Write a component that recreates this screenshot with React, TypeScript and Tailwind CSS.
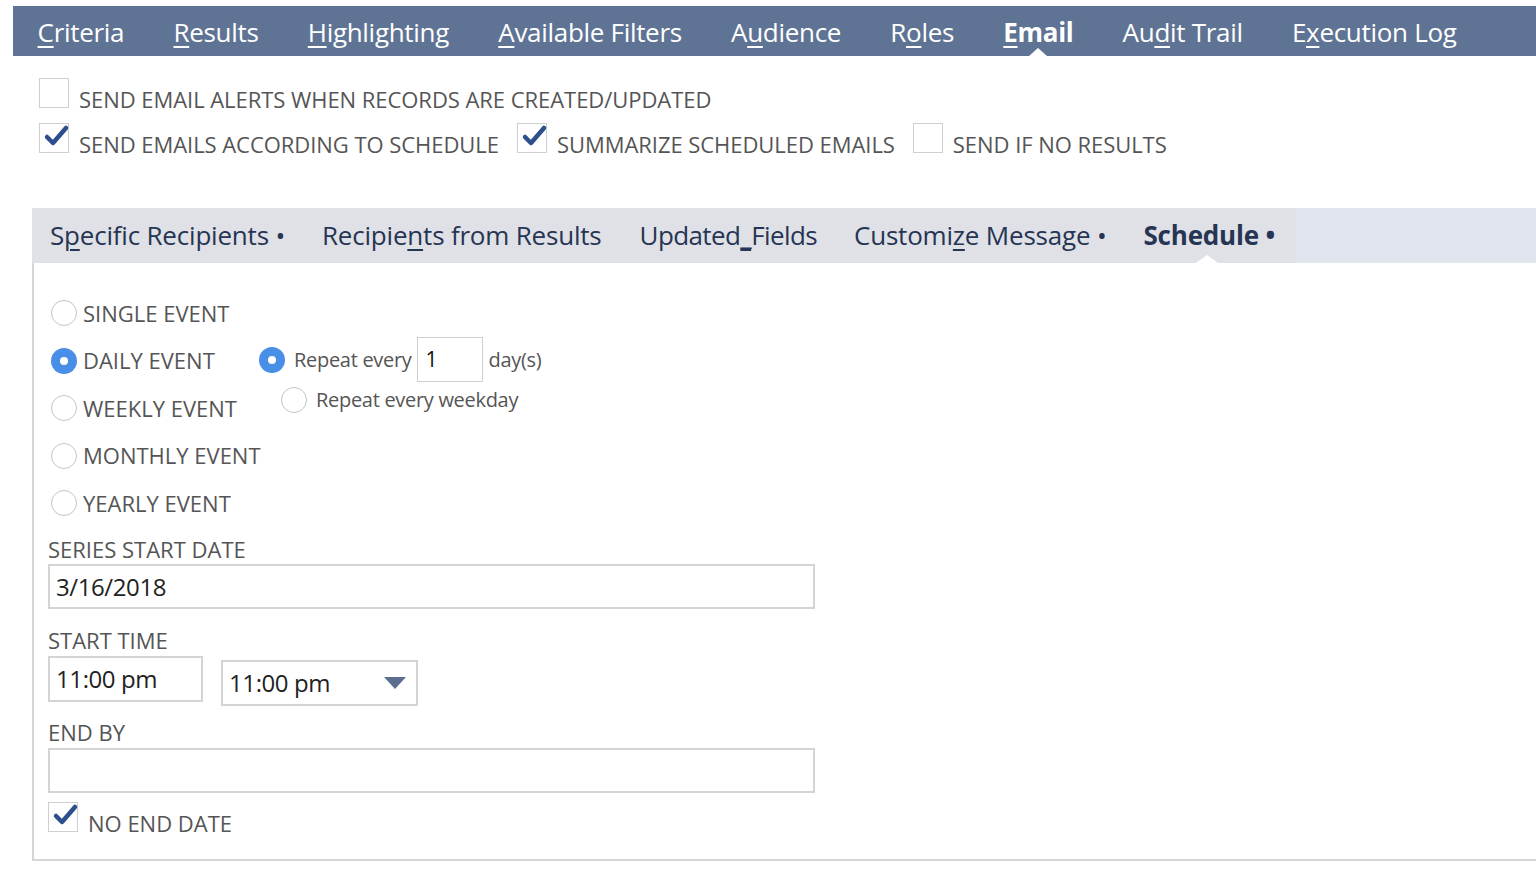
import React from "react";

const navItems = [
  { pre: "", u: "C", post: "riteria" },
  { pre: "", u: "R", post: "esults" },
  { pre: "", u: "H", post: "ighlighting" },
  { pre: "", u: "A", post: "vailable Filters" },
  { pre: "A", u: "u", post: "dience" },
  { pre: "R", u: "o", post: "les" },
  { pre: "", u: "E", post: "mail", active: true },
  { pre: "Au", u: "d", post: "it Trail" },
  { pre: "E", u: "x", post: "ecution Log" },
];

function Checkbox({ checked }: { checked?: boolean }) {
  return (
    <span className="relative inline-block h-[30px] w-[30px] shrink-0 border border-[#cfcfcf] bg-white">
      {checked ? (
        <svg viewBox="0 0 30 30" className="absolute -top-[4px] left-[2px] h-[30px] w-[30px]">
          <path d="M5 17 L11 23 L24 8" fill="none" stroke="#2f4f8c" strokeWidth="4.5" strokeLinecap="round" strokeLinejoin="round" />
        </svg>
      ) : null}
    </span>
  );
}

function Radio({ checked }: { checked?: boolean }) {
  return checked ? (
    <span className="flex h-[26px] w-[26px] shrink-0 items-center justify-center rounded-full bg-[#4a8fe7]">
      <span className="h-[8px] w-[8px] rounded-full bg-white" />
    </span>
  ) : (
    <span className="h-[26px] w-[26px] shrink-0 rounded-full border border-[#c4c4c4] bg-white" />
  );
}

function CheckLabel({ checked, label }: { checked?: boolean; label: string }) {
  return (
    <label className="flex items-end gap-[10px]">
      <Checkbox checked={checked} />
      <span className="whitespace-nowrap text-[22px] leading-[18px] tracking-[-0.05px] text-[#555]">{label}</span>
    </label>
  );
}

const fieldLabel = "text-[22px] leading-[28px] text-[#555]";
const fieldBox = "flex items-center border-2 border-[#d4d4d4] pl-[6px] text-[24px] tracking-[-0.4px] text-[#222]";

export default function App() {
  return (
    <div className="min-h-[870px] bg-white pt-[6px] text-[#555]" style={{ fontFamily: '"Open Sans", "Liberation Sans", sans-serif' }}>
      <nav className="ml-[13px] flex h-[50px] items-center bg-[#5f7494]">
        {navItems.map((n) => (
          <div
            key={n.pre + n.u + n.post}
            className={`relative flex h-full items-center px-[24.6px] pt-[2px] text-[26px] tracking-[-0.3px] text-white ${n.active ? "font-bold" : ""}`}
          >
            <span>
              {n.pre}
              <span className="underline decoration-[1.5px] underline-offset-[4px]">{n.u}</span>
              {n.post}
            </span>
            {n.active ? (
              <span className="absolute bottom-0 left-1/2 h-0 w-0 -translate-x-1/2 border-x-[9px] border-b-[8px] border-x-transparent border-b-white" />
            ) : null}
          </div>
        ))}
      </nav>

      <div className="ml-[39px] mt-[22px] flex flex-col gap-[15px]">
        <CheckLabel label="SEND EMAIL ALERTS WHEN RECORDS ARE CREATED/UPDATED" />
        <div className="flex items-end gap-[18px]">
          <CheckLabel checked label="SEND EMAILS ACCORDING TO SCHEDULE" />
          <CheckLabel checked label="SUMMARIZE SCHEDULED EMAILS" />
          <CheckLabel label="SEND IF NO RESULTS" />
        </div>
      </div>

      <div className="ml-[32px] mt-[55px]">
        <div className="flex h-[55px] bg-[#e1e6ee]">
          <div className="flex h-full items-center bg-[#e0e1e6] pl-[18px] pr-[21px] text-[26px] tracking-[-0.2px] text-[#263553]">
            <span className="mr-[37px]">
              S<span className="underline decoration-[1.5px] underline-offset-[4px]">p</span>ecific Recipients •
            </span>
            <span className="mr-[38px]">
              Recipie<span className="underline decoration-[1.5px] underline-offset-[4px]">n</span>ts from Results
            </span>
            <span className="mr-[37px] tracking-[-0.6px]">
              Updated<span className="underline decoration-[1.5px] underline-offset-[4px]">_</span>Fields
            </span>
            <span className="mr-[37px]">
              Customi<span className="underline decoration-[1.5px] underline-offset-[4px]">z</span>e Message •
            </span>
            <span className="relative flex h-full items-center font-bold">
              Schedule •
              <span className="absolute bottom-0 left-[53px] h-0 w-0 border-x-[11px] border-b-[8px] border-x-transparent border-b-white" />
            </span>
          </div>
        </div>

        <div className="flex h-[598px] flex-col border-b-2 border-l-2 border-[#d6d6d6] pl-[17px] pt-[37px]">
          <div className="flex">
            <div className="flex w-[208px] shrink-0 flex-col gap-[21.5px]">
              {[
                ["SINGLE EVENT", false],
                ["DAILY EVENT", true],
                ["WEEKLY EVENT", false],
                ["MONTHLY EVENT", false],
                ["YEARLY EVENT", false],
              ].map(([l, c]) => (
                <div key={l as string} className="flex h-[26px] items-center gap-[6px] whitespace-nowrap">
                  <Radio checked={c as boolean} />
                  <span className="text-[22px] text-[#555]">{l}</span>
                </div>
              ))}
            </div>
            <div className="mt-[37px] flex flex-col">
              <div className="flex items-center whitespace-nowrap">
                <Radio checked />
                <span className="ml-[9px] text-[20px] tracking-[-0.3px] text-[#555]">Repeat every</span>
                <span className="ml-[5px] flex h-[45px] w-[66px] items-center border border-[#cfcfcf] pl-[8px] text-[21px] text-[#111]">1</span>
                <span className="ml-[6px] text-[20px] tracking-[-0.3px] text-[#555]">day(s)</span>
              </div>
              <div className="ml-[22px] mt-[3px] flex items-center whitespace-nowrap">
                <Radio />
                <span className="ml-[9px] text-[20px] tracking-[-0.3px] text-[#555]">Repeat every weekday</span>
              </div>
            </div>
          </div>

          <div className="-ml-[3px] mt-[19px] flex flex-col">
            <span className={fieldLabel}>SERIES START DATE</span>
            <div className={`${fieldBox} mt-[1px] h-[45px] w-[767px]`}>3/16/2018</div>
            <span className={`${fieldLabel} mt-[17px]`}>START TIME</span>
            <div className="mt-[2px] flex items-start gap-[18px]">
              <div className={`${fieldBox} h-[46px] w-[155px]`}>11:00 pm</div>
              <div className={`${fieldBox} mt-[4px] h-[46px] w-[197px] justify-between pr-[10px]`}>
                11:00 pm
                <span className="h-0 w-0 border-x-[11px] border-t-[12px] border-x-transparent border-t-[#5b6e8e]" />
              </div>
            </div>
            <span className={`${fieldLabel} mt-[12px]`}>END BY</span>
            <div className="mt-[2px] h-[45px] w-[767px] border-2 border-[#d4d4d4]" />
            <div className="mt-[9px] flex items-end gap-[10px]">
              <Checkbox checked />
              <span className="text-[22px] leading-[18px] text-[#555]">NO END DATE</span>
            </div>
          </div>
        </div>
      </div>
    </div>
  );
}
